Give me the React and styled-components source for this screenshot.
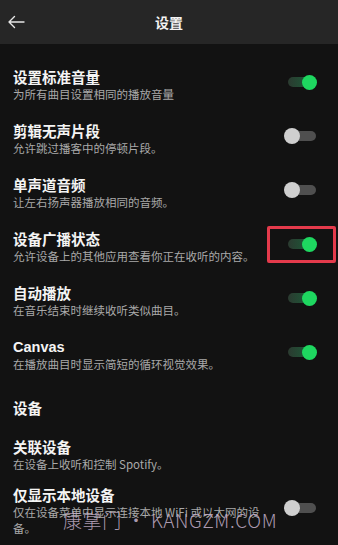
import React from "react";
import styled, { createGlobalStyle } from "styled-components";

const Global = createGlobalStyle`
  html, body { margin: 0; padding: 0; background: #121212; }
  body { font-family: "Noto Sans CJK SC", "Noto Sans", sans-serif; -webkit-font-smoothing: antialiased; }
  * { box-sizing: border-box; }
`;

const Page = styled.div`
  position: relative;
  width: 338px;
  height: 545px;
  overflow: hidden;
  background: #121212;
  color: #fff;
`;

const Header = styled.header`
  height: 44px;
  background: #262626;
  display: grid;
  grid-template-columns: 44px 1fr 44px;
  align-items: center;
`;

const BackButton = styled.div`
  display: flex;
  align-items: center;
  padding-left: 7px;
  height: 100%;
`;

const Title = styled.h1`
  margin: 0;
  text-align: center;
  font-size: 14px;
  font-weight: 700;
  line-height: 18px;
  color: #f2f2f2;
`;

const List = styled.div`
  padding-top: 14px;
  display: flex;
  flex-direction: column;
`;

const Row = styled.div`
  display: flex;
  align-items: center;
  padding: 7px 21px 7px 13px;
  gap: 8px;
`;

const TextBlock = styled.div`
  flex: 1;
  min-width: 0;
  display: flex;
  flex-direction: column;
`;

const RowTitle = styled.div`
  font-size: 14.5px;
  line-height: 18px;
  font-weight: 700;
  color: #f4f4f4;
  font-family: ${(p) => (p.$latin ? '"Liberation Sans", "Noto Sans CJK SC", sans-serif' : 'inherit')};
`;

const RowSub = styled.div`
  font-size: 11.5px;
  line-height: 16px;
  color: #a9a9a9;
`;

const SwitchArea = styled.div`
  position: relative;
  height: 40px;
  padding-bottom: 6px;
  display: flex;
  align-items: center;
`;

const Track = styled.div`
  position: relative;
  width: 33px;
  height: 16px;
  display: flex;
  align-items: center;
`;

const TrackBar = styled.div`
  position: absolute;
  left: 4px;
  right: 1px;
  top: 3px;
  height: 10px;
  border-radius: 5px;
  background: ${(p) => (p.$on ? "linear-gradient(90deg, #2b3a30, #17643a)" : "#4f4f4f")};
`;

const Knob = styled.div`
  position: absolute;
  top: ${(p) => (p.$on ? "0.5px" : "0")};
  left: ${(p) => (p.$on ? "17.5px" : "0")};
  width: ${(p) => (p.$on ? "15px" : "16px")};
  height: ${(p) => (p.$on ? "15px" : "16px")};
  border-radius: 50%;
  background: ${(p) => (p.$on ? "#1ed760" : "#cfcfcf")};
`;

const Highlight = styled.div`
  position: absolute;
  left: -17px;
  top: -1px;
  width: 69px;
  height: 37px;
  border: 3px solid #e33a4b;
  border-radius: 2px;
  pointer-events: none;
`;

const SectionHeader = styled.h2`
  margin: 0;
  padding: 17px 13px 14px;
  font-size: 14.5px;
  line-height: 18px;
  font-weight: 700;
  color: #f4f4f4;
`;

const Watermark = styled.div`
  position: absolute;
  left: 63px;
  top: 507px;
  font-family: "Noto Sans CJK SC", "Noto Sans", sans-serif;
  font-weight: 300;
  font-size: 19px;
  line-height: 26px;
  letter-spacing: 0.6px;
  color: rgba(200, 178, 205, 0.85);
  white-space: nowrap;
  pointer-events: none;
`;

function Switch({ on, highlight }) {
  return (
    <SwitchArea>
      <Track>
        <TrackBar $on={on} />
        <Knob $on={on} />
      </Track>
      {highlight && <Highlight />}
    </SwitchArea>
  );
}

function SettingRow({ title, sub, toggle, on, highlight, latin }) {
  return (
    <Row>
      <TextBlock>
        <RowTitle $latin={latin}>{title}</RowTitle>
        <RowSub>{sub}</RowSub>
      </TextBlock>
      {toggle && <Switch on={on} highlight={highlight} />}
    </Row>
  );
}

const playback = [
  { title: "设置标准音量", sub: "为所有曲目设置相同的播放音量", on: true },
  { title: "剪辑无声片段", sub: "允许跳过播客中的停顿片段。", on: false },
  { title: "单声道音频", sub: "让左右扬声器播放相同的音频。", on: false },
  { title: "设备广播状态", sub: "允许设备上的其他应用查看你正在收听的内容。", on: true, highlight: true },
  { title: "自动播放", sub: "在音乐结束时继续收听类似曲目。", on: true },
  { title: "Canvas", sub: "在播放曲目时显示简短的循环视觉效果。", on: true, latin: true },
];

export default function App() {
  return (
    <Page>
      <Global />
      <Header>
        <BackButton>
          <svg width="18" height="14" viewBox="0 0 18 14" fill="none">
            <path d="M17 7H2M7.5 1.5L2 7l5.5 5.5" stroke="#e6e6e6" strokeWidth="1.4" strokeLinecap="round" strokeLinejoin="round" />
          </svg>
        </BackButton>
        <Title>设置</Title>
        <div />
      </Header>
      <List>
        {playback.map((r) => (
          <SettingRow key={r.title} {...r} toggle />
        ))}
        <SectionHeader>设备</SectionHeader>
        <SettingRow title="关联设备" sub="在设备上收听和控制 Spotify。" />
        <SettingRow title="仅显示本地设备" sub="仅在设备菜单中显示连接本地 WiFi 或以太网的设备。" toggle on={false} />
      </List>
      <Watermark>康掌门 • KANGZM.COM</Watermark>
    </Page>
  );
}
